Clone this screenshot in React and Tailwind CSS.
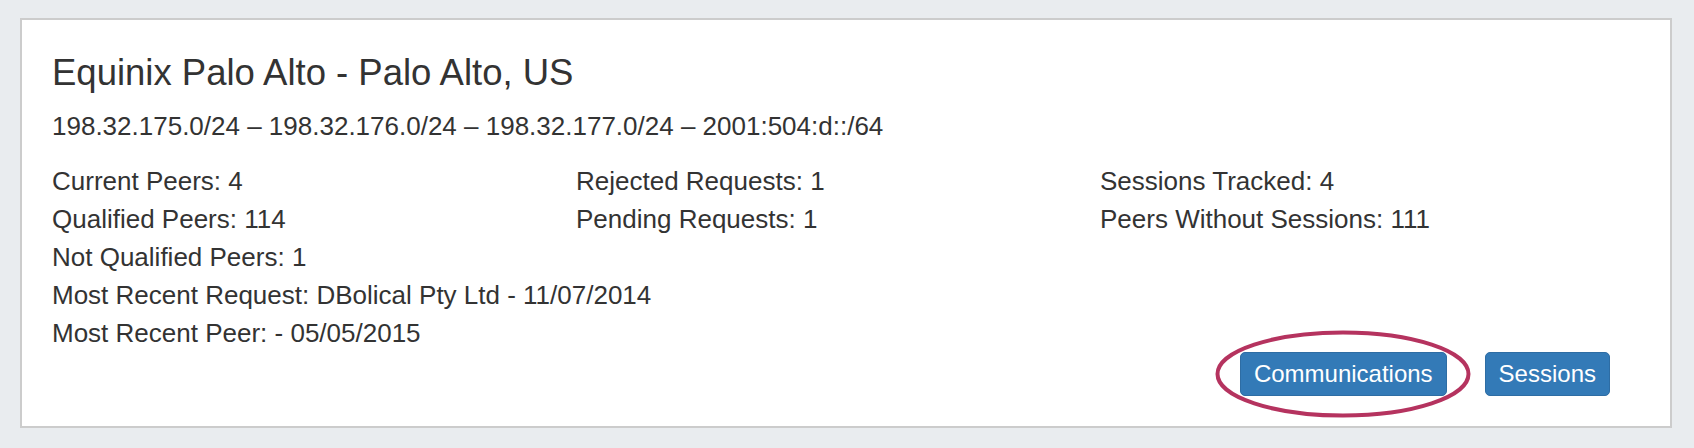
import React from 'react';

const stats = [
  ['Current Peers: 4', 'Rejected Requests: 1', 'Sessions Tracked: 4'],
  ['Qualified Peers: 114', 'Pending Requests: 1', 'Peers Without Sessions: 111'],
  ['Not Qualified Peers: 1', '', ''],
  ['Most Recent Request: DBolical Pty Ltd - 11/07/2014', '', ''],
  ['Most Recent Peer: - 05/05/2015', '', ''],
];

const Button = ({ children }) => (
  <button
    type="button"
    className="h-[44px] px-[13px] rounded-[5px] bg-[#337ab7] border border-[#2e6da4] text-white text-[24px] leading-[36px] whitespace-nowrap"
  >
    {children}
  </button>
);

export default function App() {
  return (
    <div
      className="min-h-[448px] bg-[#e9ecef] pt-[18px] pb-[20px] pl-[20px] pr-[22px] text-[#333]"
      style={{ fontFamily: '"Liberation Sans", Arial, sans-serif' }}
    >
      <div className="bg-white border-2 border-[#cccccc] pt-[33px] pb-[30px] px-[30px]">
        <h2 className="text-[36.5px] leading-[40px] font-normal">Equinix Palo Alto - Palo Alto, US</h2>
        <p className="mt-[14px] text-[26px] leading-[38px]">
          198.32.175.0/24 – 198.32.176.0/24 – 198.32.177.0/24 – 2001:504:d::/64
        </p>

        {/* stats */}
        <div className="mt-[17px] grid grid-cols-[524px_524px_524px] text-[26px] leading-[38px]">
          {stats.map((row, i) =>
            row.map((cell, j) => (
              <div key={`${i}-${j}`} className="whitespace-nowrap h-[38px]">
                {cell}
              </div>
            ))
          )}
        </div>

        <div className="flex justify-end gap-[38px] pr-[30px]">
          <div className="relative">
            <Button>Communications</Button>
            <svg
              className="absolute left-[-27px] top-[-24px] pointer-events-none"
              width="260"
              height="92"
              viewBox="0 0 260 92"
            >
              <ellipse cx="130" cy="46" rx="125.5" ry="41.5" fill="none" stroke="#b5335f" strokeWidth="4" />
            </svg>
          </div>
          <Button>Sessions</Button>
        </div>
      </div>
    </div>
  );
}
